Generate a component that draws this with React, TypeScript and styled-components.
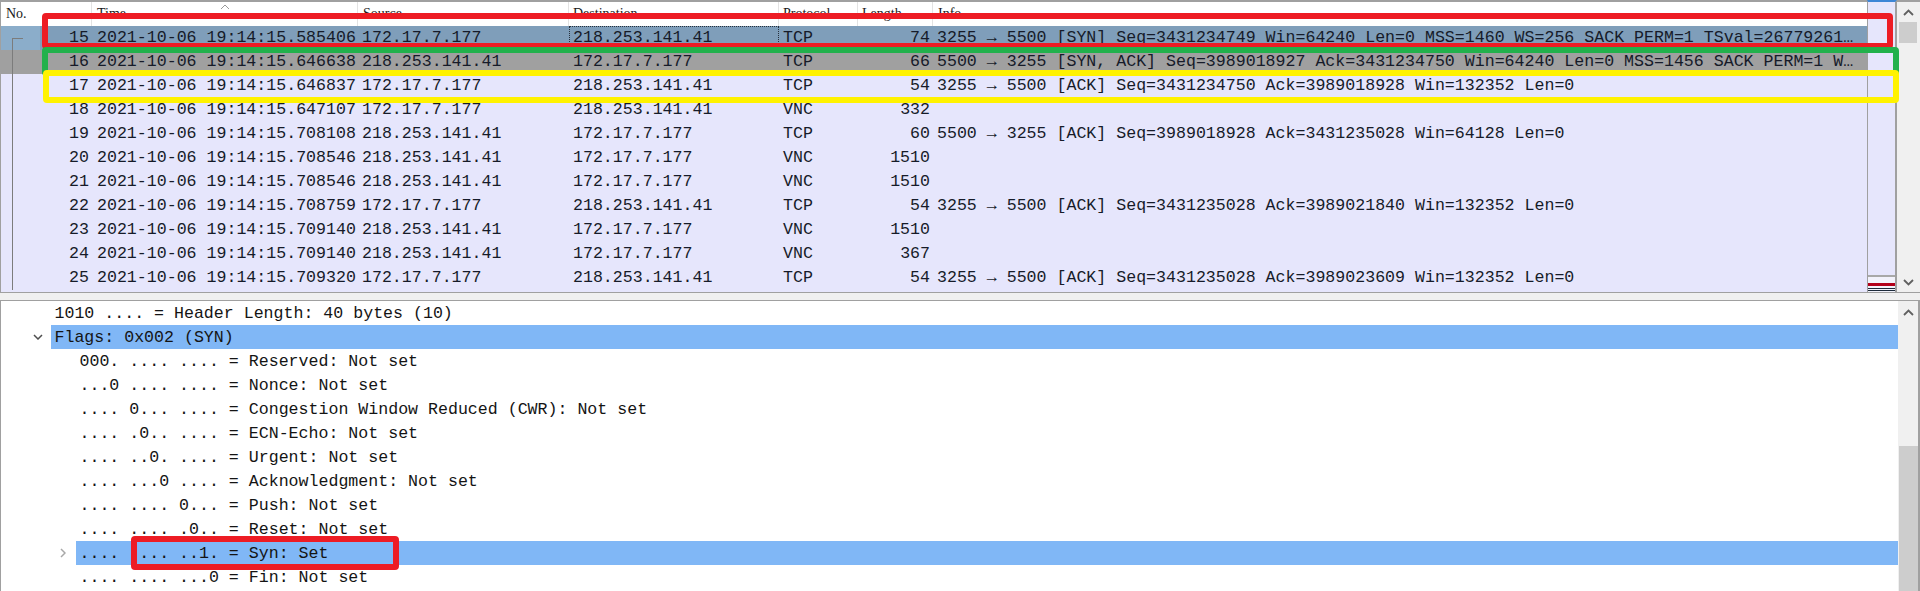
import React from 'react';
import styled, { createGlobalStyle, css } from 'styled-components';

const MONO = `"Liberation Mono", "DejaVu Sans Mono", monospace`;
const COLS = '91px 266px 211px 210px 79px 75px 1fr';

type Tone = 'selected' | 'syn' | 'normal';

const TONE_BG: Record<Tone, string> = {
  selected: '#7f9eba',
  syn: '#a0a0a0',
  normal: '#e6e6fc',
};

const GlobalStyle = createGlobalStyle`
  html, body { margin: 0; padding: 0; background: #f0f0f0; }
  body { font-family: ${MONO}; overflow: hidden; }
`;

const Screen = styled.div`
  position: relative;
  width: 1920px;
  height: 591px;
  display: flex;
  flex-direction: column;
  gap: 7px;
  overflow: hidden;
  background: #f0f0f0;
`;

/* ---------- packet list ---------- */

const PacketPane = styled.section`
  flex: none;
  height: 293px;
  box-sizing: border-box;
  display: flex;
  border-top: 2px solid #a0a0a0;
  border-bottom: 1px solid #a0a0a0;
  border-left: 1px solid #a0a0a0;
`;

const ListArea = styled.div`
  flex: 1;
  min-width: 0;
  display: flex;
  flex-direction: column;
  background: #e6e6fc;
`;

const HeaderRow = styled.div`
  flex: none;
  display: grid;
  grid-template-columns: ${COLS};
  height: 24px;
  background: #ffffff;
`;

const HeaderCell = styled.div<{ $pad: number }>`
  position: relative;
  padding-left: ${p => p.$pad}px;
  border-right: 1px solid #e3e3e3;
  font-family: "Liberation Serif", serif;
  font-size: 14px;
  line-height: 24px;
  color: #1a1a1a;
  white-space: nowrap;
  overflow: hidden;
  &:last-child {
    border-right: none;
  }
`;

const SortCaret = styled.svg`
  position: absolute;
  top: 2px;
  left: 50%;
  margin-left: -5px;
`;

const PacketRow = styled.div<{ $tone: Tone }>`
  flex: none;
  display: grid;
  grid-template-columns: ${COLS};
  height: 24px;
  font-family: ${MONO};
  font-size: 16.6px;
  line-height: 24px;
  color: #161b29;
  white-space: pre;
  background: ${p => TONE_BG[p.$tone]};
`;

const Cell = styled.div<{ $right?: boolean; $pad?: number; $focus?: boolean }>`
  overflow: hidden;
  text-align: ${p => (p.$right ? 'right' : 'left')};
  padding-left: ${p => (p.$right ? 0 : p.$pad ?? 4)}px;
  padding-right: ${p => (p.$right ? 3 : 0)}px;
  ${p =>
    p.$focus &&
    css`
      outline: 1px dotted #26303c;
      outline-offset: -1px;
    `}
`;

const NoCell = styled(Cell)<{ $link: 'first' | 'mid'; $sel?: boolean }>`
  position: relative;
  ${p =>
    p.$sel &&
    css`
      background: linear-gradient(to right, #8badca 0, #8badca 39px, transparent 39px);
    `}
  &::before {
    content: '';
    position: absolute;
    left: 11px;
    top: ${p => (p.$link === 'first' ? '12px' : '0')};
    bottom: 0;
    width: 1px;
    background: #7c7c7c;
  }
  ${p =>
    p.$link === 'first' &&
    css`
      &::after {
        content: '';
        position: absolute;
        left: 11px;
        top: 12px;
        width: 11px;
        height: 1px;
        background: #7c7c7c;
      }
    `}
`;

const Minimap = styled.div`
  flex: none;
  width: 30px;
  box-sizing: border-box;
  margin-top: -2px;
  border-top: 2px solid #3d86d6;
  border-left: 1px solid #a0a0a0;
  border-right: 2px solid #a0a0a0;
  background: #e6e6fc;
  display: flex;
  flex-direction: column;
  justify-content: flex-end;
`;

const MiniStripe = styled.div<{ $color: string; $h: number }>`
  flex: none;
  height: ${p => p.$h}px;
  background: ${p => p.$color};
`;

/* ---------- scrollbars ---------- */

const ScrollBar = styled.div<{ $w: number }>`
  flex: none;
  width: ${p => p.$w}px;
  background: #f0f0f0;
  display: flex;
  flex-direction: column;
`;

const ArrowButton = styled.div<{ $h: number }>`
  flex: none;
  height: ${p => p.$h}px;
  display: flex;
  align-items: center;
  justify-content: center;
`;

const Track = styled.div<{ $h?: number }>`
  flex: ${p => (p.$h ? 'none' : '1')};
  height: ${p => (p.$h ? `${p.$h}px` : 'auto')};
`;

const Thumb = styled.div<{ $h?: number; $ml: number; $mr: number }>`
  flex: ${p => (p.$h ? 'none' : '1')};
  height: ${p => (p.$h ? `${p.$h}px` : 'auto')};
  margin-left: ${p => p.$ml}px;
  margin-right: ${p => p.$mr}px;
  background: #cdcdcd;
`;

const Chevron: React.FC<{ dir: 'up' | 'down' }> = ({ dir }) => (
  <svg width="11" height="7" viewBox="0 0 11 7">
    <polyline
      points={dir === 'up' ? '1,6 5.5,1.5 10,6' : '1,1 5.5,5.5 10,1'}
      fill="none"
      stroke="#606060"
      strokeWidth="1.8"
    />
  </svg>
);

/* ---------- detail tree ---------- */

const DetailPane = styled.section`
  flex: 1;
  min-height: 0;
  display: flex;
  box-sizing: border-box;
  border-top: 1px solid #a0a0a0;
  border-left: 1px solid #a0a0a0;
  border-right: 2px solid #a0a0a0;
  background: #ffffff;
`;

const TreeArea = styled.div`
  flex: 1;
  min-width: 0;
  display: flex;
  flex-direction: column;
  background: #ffffff;
`;

const TreeRow = styled.div<{ $level: number }>`
  flex: none;
  display: flex;
  height: 24px;
  padding-left: ${p => p.$level * 25 - 1}px;
`;

const Toggle = styled.div`
  flex: none;
  width: 26px;
  display: flex;
  align-items: center;
  justify-content: center;
`;

const TreeLabel = styled.div<{ $selected?: boolean }>`
  flex: 1;
  min-width: 0;
  height: 24px;
  box-sizing: border-box;
  padding: 1px 0 0 3.5px;
  font-family: ${MONO};
  font-size: 16.6px;
  line-height: 24px;
  color: #141414;
  white-space: pre;
  overflow: hidden;
  background: ${p => (p.$selected ? '#80b7f6' : 'transparent')};
`;

/* ---------- annotation boxes ---------- */

const Annotation = styled.div<{ $color: string; $x: number; $y: number; $w: number; $h: number }>`
  position: absolute;
  left: ${p => p.$x}px;
  top: ${p => p.$y}px;
  width: ${p => p.$w}px;
  height: ${p => p.$h}px;
  box-sizing: border-box;
  border: 6px solid ${p => p.$color};
  border-radius: 4px;
  pointer-events: none;
`;

/* ---------- data ---------- */

interface Packet {
  no: number;
  time: string;
  src: string;
  dst: string;
  proto: string;
  len: string;
  info: string;
  tone: Tone;
}

const A = '172.17.7.177';
const B = '218.253.141.41';

const packets: Packet[] = [
  { no: 15, time: '2021-10-06 19:14:15.585406', src: A, dst: B, proto: 'TCP', len: '74', info: '3255 → 5500 [SYN] Seq=3431234749 Win=64240 Len=0 MSS=1460 WS=256 SACK PERM=1 TSval=26779261…', tone: 'selected' },
  { no: 16, time: '2021-10-06 19:14:15.646638', src: B, dst: A, proto: 'TCP', len: '66', info: '5500 → 3255 [SYN, ACK] Seq=3989018927 Ack=3431234750 Win=64240 Len=0 MSS=1456 SACK PERM=1 W…', tone: 'syn' },
  { no: 17, time: '2021-10-06 19:14:15.646837', src: A, dst: B, proto: 'TCP', len: '54', info: '3255 → 5500 [ACK] Seq=3431234750 Ack=3989018928 Win=132352 Len=0', tone: 'normal' },
  { no: 18, time: '2021-10-06 19:14:15.647107', src: A, dst: B, proto: 'VNC', len: '332', info: '', tone: 'normal' },
  { no: 19, time: '2021-10-06 19:14:15.708108', src: B, dst: A, proto: 'TCP', len: '60', info: '5500 → 3255 [ACK] Seq=3989018928 Ack=3431235028 Win=64128 Len=0', tone: 'normal' },
  { no: 20, time: '2021-10-06 19:14:15.708546', src: B, dst: A, proto: 'VNC', len: '1510', info: '', tone: 'normal' },
  { no: 21, time: '2021-10-06 19:14:15.708546', src: B, dst: A, proto: 'VNC', len: '1510', info: '', tone: 'normal' },
  { no: 22, time: '2021-10-06 19:14:15.708759', src: A, dst: B, proto: 'TCP', len: '54', info: '3255 → 5500 [ACK] Seq=3431235028 Ack=3989021840 Win=132352 Len=0', tone: 'normal' },
  { no: 23, time: '2021-10-06 19:14:15.709140', src: B, dst: A, proto: 'VNC', len: '1510', info: '', tone: 'normal' },
  { no: 24, time: '2021-10-06 19:14:15.709140', src: B, dst: A, proto: 'VNC', len: '367', info: '', tone: 'normal' },
  { no: 25, time: '2021-10-06 19:14:15.709320', src: A, dst: B, proto: 'TCP', len: '54', info: '3255 → 5500 [ACK] Seq=3431235028 Ack=3989023609 Win=132352 Len=0', tone: 'normal' },
];

interface DetailLine {
  level: number;
  text: string;
  toggle?: 'open' | 'closed';
  selected?: boolean;
}

const details: DetailLine[] = [
  { level: 1, text: '1010 .... = Header Length: 40 bytes (10)' },
  { level: 1, text: 'Flags: 0x002 (SYN)', toggle: 'open', selected: true },
  { level: 2, text: '000. .... .... = Reserved: Not set' },
  { level: 2, text: '...0 .... .... = Nonce: Not set' },
  { level: 2, text: '.... 0... .... = Congestion Window Reduced (CWR): Not set' },
  { level: 2, text: '.... .0.. .... = ECN-Echo: Not set' },
  { level: 2, text: '.... ..0. .... = Urgent: Not set' },
  { level: 2, text: '.... ...0 .... = Acknowledgment: Not set' },
  { level: 2, text: '.... .... 0... = Push: Not set' },
  { level: 2, text: '.... .... .0.. = Reset: Not set' },
  { level: 2, text: '.... .... ..1. = Syn: Set', toggle: 'closed', selected: true },
  { level: 2, text: '.... .... ...0 = Fin: Not set' },
];

const headers: { label: string; pad: number }[] = [
  { label: 'No.', pad: 5 },
  { label: 'Time', pad: 5 },
  { label: 'Source', pad: 5 },
  { label: 'Destination', pad: 4 },
  { label: 'Protocol', pad: 4 },
  { label: 'Length', pad: 4 },
  { label: 'Info', pad: 5 },
];

const TreeToggle: React.FC<{ kind?: 'open' | 'closed' }> = ({ kind }) => {
  if (kind === 'open') {
    return (
      <svg width="10" height="6" viewBox="0 0 10 6">
        <polyline points="1,1 5,5 9,1" fill="none" stroke="#4e4e4e" strokeWidth="1.5" />
      </svg>
    );
  }
  if (kind === 'closed') {
    return (
      <svg width="6" height="10" viewBox="0 0 6 10">
        <polyline points="1,1 5,5 1,9" fill="none" stroke="#a8a8a8" strokeWidth="1.5" />
      </svg>
    );
  }
  return null;
};

export default function App() {
  return (
    <>
      <GlobalStyle />
      <Screen>
        <PacketPane>
          <ListArea>
            <HeaderRow>
              {headers.map(h => (
                <HeaderCell key={h.label} $pad={h.pad}>
                  {h.label}
                  {h.label === 'Time' && (
                    <SortCaret width="10" height="6" viewBox="0 0 10 6">
                      <polyline points="1,5 5,1 9,5" fill="none" stroke="#9a9a9a" strokeWidth="1" />
                    </SortCaret>
                  )}
                </HeaderCell>
              ))}
            </HeaderRow>
            {packets.map((p, i) => (
              <PacketRow key={p.no} $tone={p.tone}>
                <NoCell $right $link={i === 0 ? 'first' : 'mid'} $sel={p.tone === 'selected'}>
                  {p.no}
                </NoCell>
                <Cell $pad={5}>{p.time}</Cell>
                <Cell $pad={4}>{p.src}</Cell>
                <Cell $pad={4} $focus={p.tone === 'selected'}>{p.dst}</Cell>
                <Cell $pad={4}>{p.proto}</Cell>
                <Cell $right>{p.len}</Cell>
                <Cell $pad={4}>{p.info}</Cell>
              </PacketRow>
            ))}
          </ListArea>
          <Minimap>
            <MiniStripe $color="#a8a8a8" $h={2} />
            <MiniStripe $color="#f2f2fb" $h={6} />
            <MiniStripe $color="#b3001b" $h={3} />
            <MiniStripe $color="#f2f2fb" $h={2} />
            <MiniStripe $color="#1d2a3a" $h={1} />
            <MiniStripe $color="#f2f2fb" $h={1} />
            <MiniStripe $color="#1d2a3a" $h={1} />
            <MiniStripe $color="#f2f2fb" $h={1} />
          </Minimap>
          <ScrollBar $w={23}>
            <ArrowButton $h={20}>
              <Chevron dir="up" />
            </ArrowButton>
            <Thumb $h={21} $ml={2} $mr={3} />
            <Track />
            <ArrowButton $h={20}>
              <Chevron dir="down" />
            </ArrowButton>
          </ScrollBar>
        </PacketPane>

        <DetailPane>
          <TreeArea>
            {details.map((d, i) => (
              <TreeRow key={i} $level={d.level}>
                <Toggle>
                  <TreeToggle kind={d.toggle} />
                </Toggle>
                <TreeLabel $selected={d.selected}>{d.text}</TreeLabel>
              </TreeRow>
            ))}
          </TreeArea>
          <ScrollBar $w={20}>
            <ArrowButton $h={22}>
              <Chevron dir="up" />
            </ArrowButton>
            <Track $h={123} />
            <Thumb $ml={1} $mr={0} />
          </ScrollBar>
        </DetailPane>

        <Annotation $color="#ed1c24" $x={42} $y={13} $w={1851} $h={36} />
        <Annotation $color="#22b14c" $x={42} $y={47} $w={1857} $h={29} />
        <Annotation $color="#fff200" $x={43} $y={70} $w={1856} $h={33} />
        <Annotation $color="#ed1c24" $x={131} $y={536} $w={268} $h={34} />
      </Screen>
    </>
  );
}
